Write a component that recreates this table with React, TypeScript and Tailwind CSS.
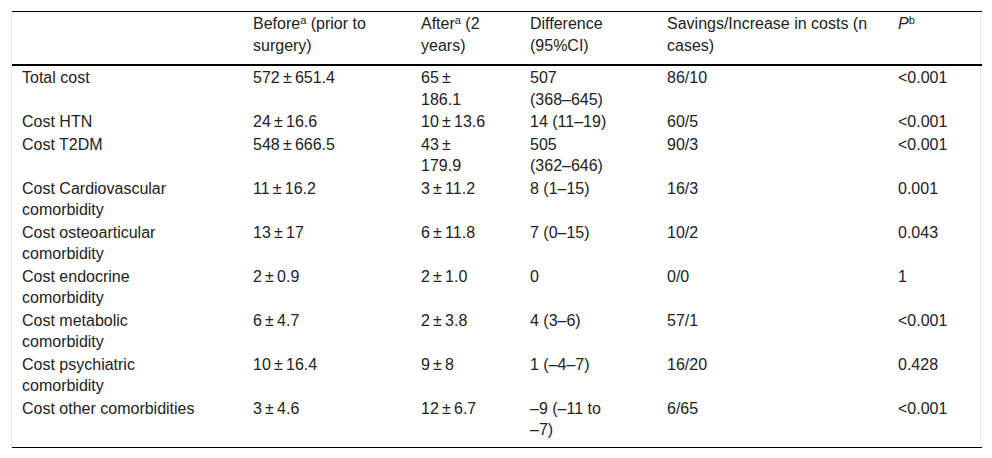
import React from 'react';

type Row = {
  label: string;
  before: string;
  after: string;
  diff: string;
  savings: string;
  p: string;
};

const rows: Row[] = [
  { label: 'Total cost', before: '572 ± 651.4', after: '65 ± 186.1', diff: '507 (368–645)', savings: '86/10', p: '<0.001' },
  { label: 'Cost HTN', before: '24 ± 16.6', after: '10 ± 13.6', diff: '14 (11–19)', savings: '60/5', p: '<0.001' },
  { label: 'Cost T2DM', before: '548 ± 666.5', after: '43 ± 179.9', diff: '505 (362–646)', savings: '90/3', p: '<0.001' },
  { label: 'Cost Cardiovascular comorbidity', before: '11 ± 16.2', after: '3 ± 11.2', diff: '8 (1–15)', savings: '16/3', p: '0.001' },
  { label: 'Cost osteoarticular comorbidity', before: '13 ± 17', after: '6 ± 11.8', diff: '7 (0–15)', savings: '10/2', p: '0.043' },
  { label: 'Cost endocrine comorbidity', before: '2 ± 0.9', after: '2 ± 1.0', diff: '0', savings: '0/0', p: '1' },
  { label: 'Cost metabolic comorbidity', before: '6 ± 4.7', after: '2 ± 3.8', diff: '4 (3–6)', savings: '57/1', p: '<0.001' },
  { label: 'Cost psychiatric comorbidity', before: '10 ± 16.4', after: '9 ± 8', diff: '1 (–4–7)', savings: '16/20', p: '0.428' },
  { label: 'Cost other comorbidities', before: '3 ± 4.6', after: '12 ± 6.7', diff: '–9 (–11 to –7)', savings: '6/65', p: '<0.001' },
];

// thin space around ± like the journal typesetting
const pm = (s: string) => s.replace(' ± ', '\u2009±\u2009');
// no line break next to an en dash, ranges stay whole
const nd = (s: string) => s.replace(/–/g, '\u2060–\u2060');

const th = 'pl-[10px] pt-[1px] pb-[8px] font-normal';

export default function App() {
  return (
    <div className="min-h-screen bg-white px-[11px] pt-[11px] font-['Liberation_Sans',Arial,sans-serif] text-[16px] leading-[21.5px] text-[#222]">
      <div className="border-x border-[#ececec]">
        <table className="w-full table-fixed border-collapse text-left">
          <colgroup>
            <col className="w-[231px]" />
            <col className="w-[168px]" />
            <col className="w-[109px]" />
            <col className="w-[137px]" />
            <col className="w-[231px]" />
            <col className="w-[94px]" />
          </colgroup>
          <thead>
            <tr className="border-t border-b-2 border-black align-top">
              <th className={`${th} pr-[30px]`} />
              <th className={`${th} pr-[30px]`}>
                Before<sup className="text-[11px] leading-none">a</sup> (prior to surgery)
              </th>
              <th className={`${th} pr-[30px]`}>
                After<sup className="text-[11px] leading-none">a</sup> (2 years)
              </th>
              <th className={`${th} pr-[30px]`}>Difference (95%CI)</th>
              <th className={`${th} pr-[10px]`}>Savings/Increase in costs (n cases)</th>
              <th className={`${th} pr-[10px]`}>
                <i>P</i>
                <sup className="text-[11px] leading-none">b</sup>
              </th>
            </tr>
          </thead>
          <tbody className="border-b border-black">
            {rows.map((r, i) => {
              const td = `pl-[10px] pt-[1px] ${i === rows.length - 1 ? 'pb-[6px]' : ''}`;
              return (
                <tr key={r.label} className="align-top">
                  <td className={`${td} pr-[30px]`}>{r.label}</td>
                  <td className={`${td} pr-[30px]`}>{pm(r.before)}</td>
                  <td className={`${td} pr-[30px]`}>{pm(r.after)}</td>
                  <td className={`${td} pr-[30px]`}>{nd(r.diff)}</td>
                  <td className={`${td} pr-[10px]`}>{r.savings}</td>
                  <td className={`${td} pr-[10px]`}>{r.p}</td>
                </tr>
              );
            })}
          </tbody>
        </table>
      </div>
    </div>
  );
}
